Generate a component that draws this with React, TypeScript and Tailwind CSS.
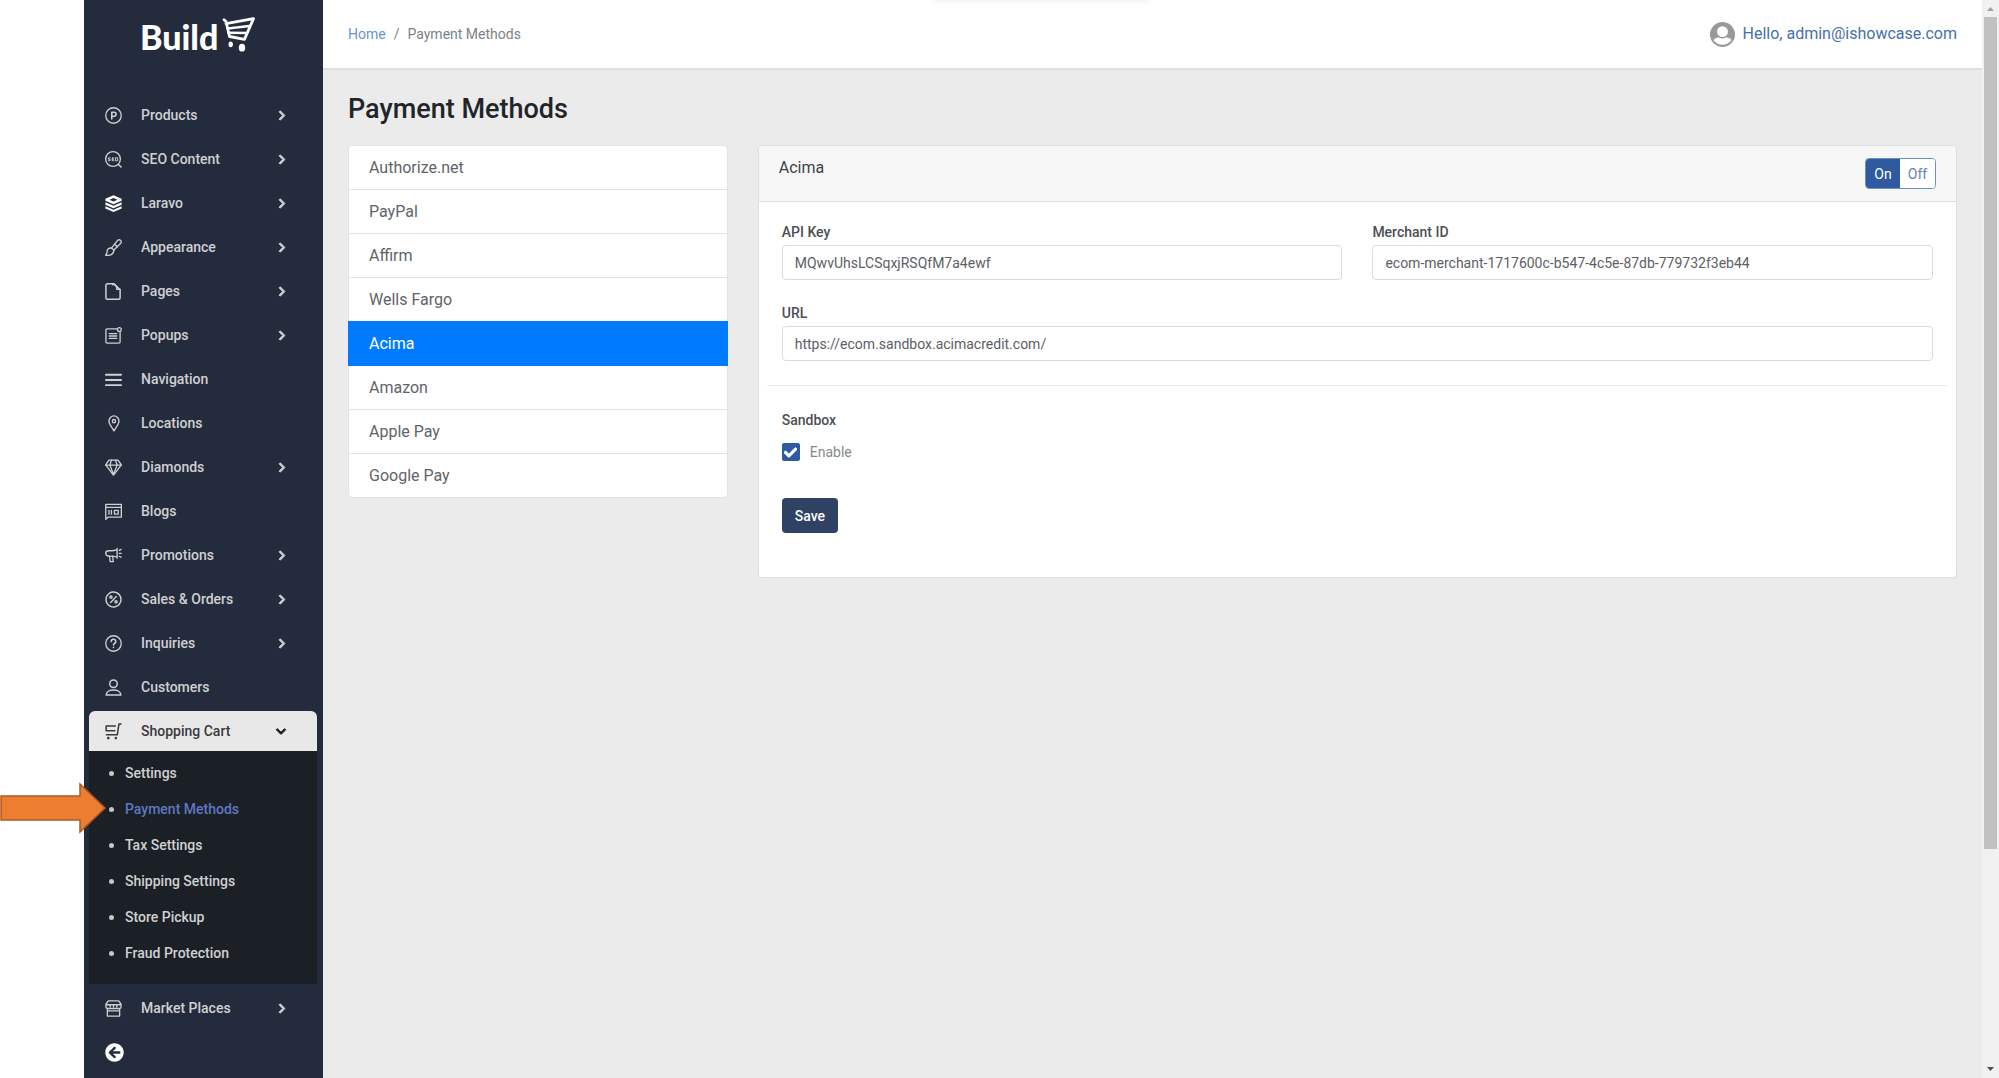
import { useState } from "react";
import type { ReactNode } from "react";
import { FaArrowCircleLeft, FaCheck, FaChevronDown, FaChevronRight } from "react-icons/fa";

interface NavEntry {
  label: string;
  icon: ReactNode;
  expandable?: boolean;
}

function Icon({ children }: { children: ReactNode }) {
  return (
    <svg
      viewBox="0 0 18 18"
      className="h-[17px] w-[17px] shrink-0"
      fill="none"
      stroke="currentColor"
      strokeWidth="1.4"
      strokeLinecap="round"
      strokeLinejoin="round"
      aria-hidden="true"
    >
      {children}
    </svg>
  );
}

const navEntries: NavEntry[] = [
  {
    label: "Products",
    expandable: true,
    icon: (
      <Icon>
        <circle cx="9" cy="9" r="8.2" />
        <path d="M7.2 12.6V5.6h2.4a2 2 0 0 1 0 4.2H7.2" strokeWidth="1.7" />
      </Icon>
    ),
  },
  {
    label: "SEO Content",
    expandable: true,
    icon: (
      <Icon>
        <circle cx="8.5" cy="8.5" r="7.8" />
        <path d="M14.2 14.2l2.8 2.8" strokeWidth="1.6" />
        <path
          d="M5.4 7.2H3.6v1.5h1.8v1.6H3.6M9.4 7.2H7.7v3.1h1.7M7.7 8.7h1.5M11.5 7.2h1.9v3.1h-1.9z"
          strokeWidth="1"
        />
      </Icon>
    ),
  },
  {
    label: "Laravo",
    expandable: true,
    icon: (
      <Icon>
        <g fill="#fff" stroke="none">
          <path
            fillRule="evenodd"
            d="M9 .3L17.6 4v2L9 9.8.4 6V4zM9 3.2L4.8 5 9 6.8 13.2 5z"
          />
          <path d="M.4 7.6L9 11.4l8.6-3.8v2.6L9 14 .4 10.2z" />
          <path d="M.4 11.8L9 15.6l8.6-3.8v2.4L9 18 .4 14.2z" />
        </g>
      </Icon>
    ),
  },
  {
    label: "Appearance",
    expandable: true,
    icon: (
      <Icon>
        <path d="M6.8 9.6l6.6-8.1c1.8-1.9 4.9.8 3.3 2.9L9.4 11.6" />
        <path d="M6.8 9.6c-2.9-.3-4.5 1.2-4.6 3.7 0 1.7-.5 2.7-1.5 3.9 4.5.5 8.8-.6 8.7-5.6z" />
        <path d="M10.2 5.6l2.9 2.7" />
      </Icon>
    ),
  },
  {
    label: "Pages",
    expandable: true,
    icon: (
      <Icon>
        <path
          d="M2.5.8h7.2L16 7.1v8.6a1.5 1.5 0 0 1-1.5 1.5h-12A1.5 1.5 0 0 1 1 15.7V2.3A1.5 1.5 0 0 1 2.5.8z"
          strokeWidth="1.6"
        />
        <path d="M8 1v.8c3.8.2 4.2 1.7 4.4 4.8H16" />
      </Icon>
    ),
  },
  {
    label: "Popups",
    expandable: true,
    icon: (
      <Icon>
        <path d="M12.5 2H2.3A1.3 1.3 0 0 0 1 3.3v12.4A1.3 1.3 0 0 0 2.3 17h12.4a1.3 1.3 0 0 0 1.3-1.3V5.5" />
        <circle cx="15.2" cy="2.7" r="2" />
        <path d="M4.5 7h8M4.5 9.5h8M4.5 12h8" />
      </Icon>
    ),
  },
  {
    label: "Navigation",
    icon: (
      <Icon>
        <path d="M1 4h16M1 9.5h16M1 15h16" strokeWidth="2" />
      </Icon>
    ),
  },
  {
    label: "Locations",
    icon: (
      <Icon>
        <path d="M9.5 16.8C8 13.5 4.2 10.2 4.2 6.3a5.3 5.3 0 0 1 10.6 0c0 3.9-3.8 7.2-5.3 10.5z" />
        <circle cx="9.5" cy="6.5" r="1.7" />
      </Icon>
    ),
  },
  {
    label: "Diamonds",
    expandable: true,
    icon: (
      <Icon>
        <path d="M4.2 1.2h9.6l3.5 5L9 17 .7 6.2z" />
        <path d="M.7 6.5h16.6M6.8 1.2L5.2 6.5 9 16.5l3.8-10-1.6-5.3" />
      </Icon>
    ),
  },
  {
    label: "Blogs",
    icon: (
      <Icon>
        <path d="M.8 1.5h16.5v13.4H3.6L.8 17.2zM.8 4.6h16.5" />
        <path d="M4.2 7.8v4M6.8 7.8v4M10 7.8h4v4h-4z" />
      </Icon>
    ),
  },
  {
    label: "Promotions",
    expandable: true,
    icon: (
      <Icon>
        <path d="M12.8 1.5v10.4M12.8 2.8C10.5 4 8.5 4 4 4 1.8 4 .8 5.2.8 6.7S2 9.6 4 9.6c4.5 0 6.5 0 8.8 1.2" />
        <path d="M4.7 9.8l.8 5.6h3.3l-.7-5.6M15 3.5l2-1M15 6.7h2.2M15 9.8l2 1" />
      </Icon>
    ),
  },
  {
    label: "Sales & Orders",
    expandable: true,
    icon: (
      <Icon>
        <circle cx="9" cy="9" r="7.9" strokeDasharray="3.3 .8" strokeWidth="1.6" />
        <path d="M6 12.2l6-6.4" />
        <circle cx="6.3" cy="6.5" r="1.2" />
        <circle cx="11.7" cy="11.5" r="1.2" />
      </Icon>
    ),
  },
  {
    label: "Inquiries",
    expandable: true,
    icon: (
      <Icon>
        <circle cx="9" cy="9" r="8.2" />
        <path d="M6.6 7A2.4 2.4 0 1 1 10 9c-.8.4-1 .8-1 1.7M9 13v.2" strokeWidth="1.6" />
      </Icon>
    ),
  },
  {
    label: "Customers",
    icon: (
      <Icon>
        <circle cx="9" cy="5" r="4" strokeWidth="1.6" />
        <path d="M1.2 17c0-3.4 3.7-5.4 7.8-5.4s7.8 2 7.8 5.4z" strokeWidth="1.6" />
      </Icon>
    ),
  },
];

const cartLinks = [
  "Settings",
  "Payment Methods",
  "Tax Settings",
  "Shipping Settings",
  "Store Pickup",
  "Fraud Protection",
];

const paymentMethods = [
  "Authorize.net",
  "PayPal",
  "Affirm",
  "Wells Fargo",
  "Acima",
  "Amazon",
  "Apple Pay",
  "Google Pay",
];

function NavItem({ label, icon, expandable }: NavEntry) {
  return (
    <a href="#" className="flex h-10 items-center pr-[31px] pl-4 text-[#d0d0d2]">
      {icon}
      <span className="ml-[19px] flex-1">{label}</span>
      {expandable && (
        <FaChevronRight className="h-[11px] w-2 overflow-visible" stroke="currentColor" strokeWidth="40" />
      )}
    </a>
  );
}

function Logo() {
  return (
    <a href="#" className="flex h-[91px] items-start gap-1 pt-4 pl-[51px] text-white" aria-label="Build">
      <span className="font-['Lato',sans-serif] text-[34px] leading-[42px] font-black">Build</span>
      <svg viewBox="0 0 34 36" className="h-9 w-[34px]" aria-hidden="true">
        <g fill="none" stroke="#fff" strokeLinecap="round" strokeLinejoin="round">
          <path d="M2 3.700l2 1.800 3.500 15 15 2.800L31.500 2.600 4 7.700" strokeWidth="2.800" />
          <path d="M5.500 12.500L27.500 10M6.500 16.800l18.500.200" strokeWidth="2.600" />
        </g>
        <ellipse cx="8.700" cy="28.300" rx="2.200" ry="2.900" fill="#fff" />
        <ellipse cx="20" cy="31.700" rx="3.200" ry="3.900" fill="#fff" />
      </svg>
    </a>
  );
}

function Sidebar() {
  return (
    <aside className="flex min-h-screen w-[239px] shrink-0 flex-col bg-[#232b3c] pr-[6px] pl-[5px] text-sm font-medium">
      <Logo />

      <nav className="mt-1 flex flex-col gap-1">
        {navEntries.map((entry) => (
          <NavItem key={entry.label} {...entry} />
        ))}

        <div>
          <button
            type="button"
            className="flex h-10 w-full items-center rounded-t-md bg-[#e8e8e8] pr-[31px] pl-4 text-left text-[#3a3a3e]"
          >
            <Icon>
              <path d="M17 1h-2.2l-1.800 11.500H1.500M11 3.200H1.200v5h9.300" strokeWidth="1.600" />
              <circle cx="3.500" cy="16" r=".7" />
              <circle cx="11.500" cy="16" r=".7" />
            </Icon>
            <span className="ml-[19px] flex-1">Shopping Cart</span>
            <FaChevronDown
              className="h-[11px] w-[10px] overflow-visible text-[#1d2025]"
              stroke="currentColor"
              strokeWidth="40"
            />
          </button>

          <ul className="bg-[#1b1f26] pt-1 pb-[13px]">
            {cartLinks.map((link) => (
              <li key={link} className="flex h-9 items-center gap-[11px] pl-5">
                <span className="h-[5px] w-[5px] rounded-full bg-[#c6c7c9]" />
                <a
                  href="#"
                  className={link === "Payment Methods" ? "text-[#5d78c4]" : "text-[#d0d0d2]"}
                >
                  {link}
                </a>
              </li>
            ))}
          </ul>
        </div>

        <NavItem
          label="Market Places"
          expandable
          icon={
            <Icon>
              <path d="M3.500 1h11L17 4.500v3a1.500 1.500 0 0 1-1.500 1.500h-13A1.500 1.500 0 0 1 1 7.500v-3zM2.500 9v8h13V9M1 5h16" />
              <path d="M5.500 5.500v2M9 5.500v2M12.500 5.500v2M3 11.500h12" />
            </Icon>
          }
        />
        <button type="button" aria-label="Collapse menu" className="flex h-10 items-center pl-4 text-white">
          <FaArrowCircleLeft className="h-[19px] w-[19px]" />
        </button>
      </nav>
    </aside>
  );
}

function TopBar() {
  return (
    <header className="flex h-[70px] items-center justify-between border-b-2 border-[#dedede] bg-white px-[25px]">
      <nav aria-label="Breadcrumb" className="flex gap-2 text-sm text-[#7c8287]">
        <a href="#" className="text-[#6c92c8]">
          Home
        </a>
        <span>/</span>
        <span>Payment Methods</span>
      </nav>

      <a href="#" className="flex items-center gap-2 text-base text-[#4770ab]">
        <svg viewBox="0 0 25 25" className="h-[25px] w-[25px]" aria-hidden="true">
          <circle cx="12.5" cy="12.5" r="12.5" fill="#999" />
          <path d="M3.500 18c1.500-2 3.500-2.500 5.800-3h6.400c2.300.5 4.300 1 5.800 3a10.800 10.800 0 0 1-18 0z" fill="#fff" />
          <circle cx="12.5" cy="9.600" r="6.200" fill="#fff" stroke="#999" strokeWidth="1.500" />
        </svg>
        Hello, admin@ishowcase.com
      </a>
    </header>
  );
}

interface FieldProps {
  id: string;
  label: string;
  value: string;
}

function Field({ id, label, value }: FieldProps) {
  return (
    <div>
      <label htmlFor={id} className="block text-sm leading-[26px] font-medium text-[#4c4f54]">
        {label}
      </label>
      <input
        id={id}
        type="text"
        defaultValue={value}
        className="block h-[35px] w-full rounded border border-[#d9dbe3] bg-white px-3 text-sm text-[#5c6066]"
      />
    </div>
  );
}

function SettingsCard() {
  const [enabled, setEnabled] = useState(true);
  const [sandbox, setSandbox] = useState(true);

  return (
    <section className="col-span-3 rounded border border-[#dfdfdf] bg-white">
      <div className="flex justify-between rounded-t border-b border-[#dfdfdf] bg-[#f7f7f7] px-5 py-3">
        <h2 className="text-base leading-5 text-[#3f4347]">Acima</h2>
        <div className="flex h-[31px] overflow-hidden rounded border border-[#6c8fc4] text-sm">
          <button
            type="button"
            onClick={() => setEnabled(true)}
            className={enabled ? "w-[34px] bg-[#2f5a9f] text-white" : "w-[34px] bg-white text-[#5f83b8]"}
          >
            On
          </button>
          <button
            type="button"
            onClick={() => setEnabled(false)}
            className={enabled ? "w-[35px] bg-white text-[#5f83b8]" : "w-[35px] bg-[#2f5a9f] text-white"}
          >
            Off
          </button>
        </div>
      </div>

      <form className="px-2 pt-[17px] pb-11" onSubmit={(e) => e.preventDefault()}>
        <div className="grid grid-cols-2 gap-x-[30px] gap-y-5 px-[15px]">
          <Field id="api-key" label="API Key" value="MQwvUhsLCSqxjRSQfM7a4ewf" />
          <Field id="merchant-id" label="Merchant ID" value="ecom-merchant-1717600c-b547-4c5e-87db-779732f3eb44" />
          <div className="col-span-2">
            <Field id="url" label="URL" value="https://ecom.sandbox.acimacredit.com/" />
          </div>
        </div>

        <hr className="mt-6 mb-[21px] border-[#ebebeb]" />

        <fieldset className="px-[15px]">
          <legend className="text-sm leading-[26px] font-medium text-[#4c4f54]">Sandbox</legend>
          <label className="mt-[10px] flex h-[18px] items-center gap-[10px] text-sm text-[#85898d]">
            <span className="relative h-[18px] w-[18px]">
              <input
                type="checkbox"
                checked={sandbox}
                onChange={(e) => setSandbox(e.target.checked)}
                className="block h-[18px] w-[18px] appearance-none rounded-xs border border-[#2f5a9f] checked:bg-[#2f5a9f]"
              />
              {sandbox && (
                <FaCheck
                  className="pointer-events-none absolute inset-0 m-auto h-[13px] w-[13px] text-white"
                  stroke="currentColor"
                  strokeWidth="30"
                />
              )}
            </span>
            Enable
          </label>
        </fieldset>

        <button
          type="submit"
          className="mt-[37px] ml-[15px] h-[35px] rounded bg-[#2f4263] px-[13px] text-sm font-medium text-white"
        >
          Save
        </button>
      </form>
    </section>
  );
}

function ScrollRail() {
  return (
    <div className="flex w-[17px] shrink-0 flex-col items-center bg-[#f1f1f1]" aria-hidden="true">
      <svg viewBox="0 0 17 17" className="h-[17px] w-[17px]" fill="#a3a3a3">
        <path d="M5 11h7L8.5 7z" />
      </svg>
      <div className="flex w-full flex-1 flex-col items-center">
        <div className="h-[calc(80%-3px)] w-[13px] bg-[#c1c1c1]" />
      </div>
      <svg viewBox="0 0 17 17" className="h-[17px] w-[17px]" fill="#505050">
        <path d="M5 6h7l-3.5 4z" />
      </svg>
    </div>
  );
}

export default function App() {
  return (
    <div className="relative flex min-h-screen overflow-hidden bg-white pl-[84px] font-['Roboto',sans-serif]">
      <Sidebar />

      <main className="min-w-0 flex-1 bg-[#ebebeb]">
        <TopBar />

        <div className="px-[25px] pt-[21px]">
          <h1 className="text-[27px] leading-9 font-medium text-[#212529]">Payment Methods</h1>

          <div className="mt-[18px] grid grid-cols-4 items-start gap-[30px]">
            <ul className="pt-px">
              {paymentMethods.map((method) => (
                <li key={method} className="group -mt-px">
                  <a
                    href="#"
                    className={
                      method === "Acima"
                        ? "relative z-10 flex h-[45px] items-center border border-[#007bff] bg-[#007bff] px-5 text-white"
                        : "flex h-[45px] items-center border border-[#e3e3e3] bg-white px-5 text-[#5f6468] group-first:rounded-t group-last:rounded-b"
                    }
                  >
                    {method}
                  </a>
                </li>
              ))}
            </ul>

            <SettingsCard />
          </div>
        </div>
      </main>

      <ScrollRail />

      {/* soft shadow cast from above the window edge */}
      <div className="absolute -top-2 left-[932px] h-2 w-[218px] rounded-full shadow-[0_1px_6px_rgba(0,0,0,0.08)]" />

      <svg viewBox="0 0 108 54" className="absolute top-[781px] left-0 h-[54px] w-[108px]" aria-hidden="true">
        <path d="M1 15h79V3l25 24-25 24V39H1z" fill="#ed7d31" stroke="#ae5a21" strokeWidth="1.5" />
      </svg>
    </div>
  );
}
